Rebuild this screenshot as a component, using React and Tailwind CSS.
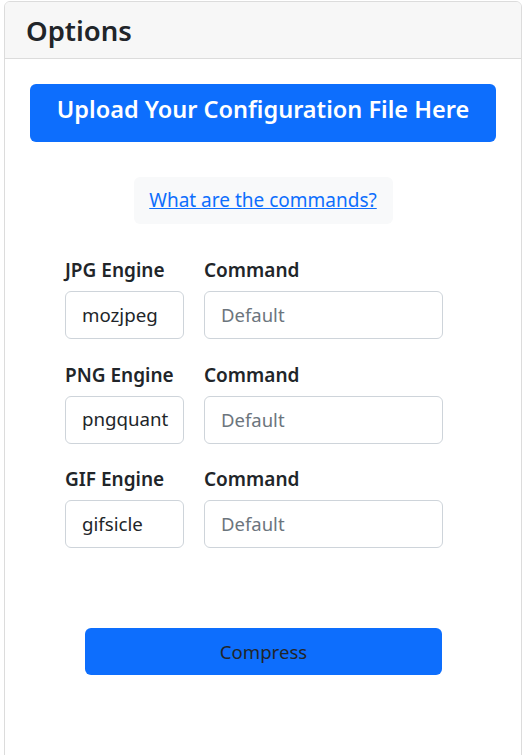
export default function App() {
  const rows = [
    { label: "JPG Engine", value: "mozjpeg" },
    { label: "PNG Engine", value: "pngquant" },
    { label: "GIF Engine", value: "gifsicle" },
  ];
  return (
    <div className="w-[523px] h-[755px] overflow-hidden bg-white pl-[4px] pt-[1px] pr-[1px]" style={{ fontFamily: '"Noto Sans", "Open Sans", sans-serif' }}>
      <div className="h-[760px] border border-[#dcdcdc] rounded-[6px] flex flex-col overflow-hidden">
        <div className="h-[57px] bg-[#f7f7f7] border-b border-[#dcdcdc] flex items-center pl-[21px] pt-[2px]">
          <span className="text-[27.5px] font-semibold text-[#212529] leading-none">Options</span>
        </div>
        <div className="flex flex-col pt-[25px]">
          <div className="px-[25px]">
            <button className="w-full h-[58px] bg-[#0d6efd] rounded-[6px] text-white text-[23.5px] font-semibold pb-[7px]">
              Upload Your Configuration File Here
            </button>
          </div>
          <div className="flex justify-center mt-[35px]">
            <div className="w-[259px] h-[47px] bg-[#f8f9fa] rounded-[6px] flex items-center justify-center">
              <a href="#" className="text-[#0d6efd] underline text-[19px]">What are the commands?</a>
            </div>
          </div>
          <div className="flex flex-col gap-[14.5px] mt-[25px] pl-[60px]">
            {rows.map((r) => (
              <div key={r.label} className="flex gap-[20px]">
                <div className="flex flex-col w-[119px]">
                  <div className="h-[42px] text-[19px] font-semibold text-[#212529] leading-[42px] whitespace-nowrap">{r.label}</div>
                  <div className="h-[48px] border border-[#ced4da] rounded-[6px] flex items-center px-[16px] text-[18.7px] text-[#212529]">{r.value}</div>
                </div>
                <div className="flex flex-col w-[239px]">
                  <div className="h-[42px] text-[19px] font-semibold text-[#212529] leading-[42px]">Command</div>
                  <div className="h-[48px] border border-[#ced4da] rounded-[6px] flex items-center px-[16px] text-[18.5px] text-[#6c757d]">Default</div>
                </div>
              </div>
            ))}
          </div>
          <div className="pl-[80px] mt-[80px]">
            <button className="w-[357px] h-[47px] bg-[#0d6efd] rounded-[6px] text-[#212529] text-[18.6px]">Compress</button>
          </div>
        </div>
      </div>
    </div>
  );
}
